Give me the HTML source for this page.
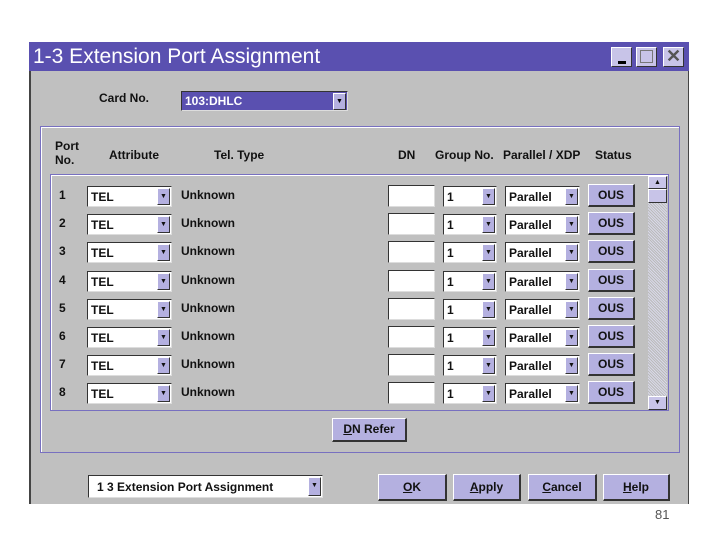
<!DOCTYPE html>
<html><head><meta charset="utf-8"><style>
*{box-sizing:border-box;margin:0;padding:0}
body{width:720px;height:540px;background:#fff;position:relative;overflow:hidden;font-family:"Liberation Sans",Arial,sans-serif;font-weight:bold;font-size:12px;color:#111}
.a{position:absolute}
#win{left:29px;top:42px;width:660px;height:462px;background:#c0c0c0;border-left:2px solid #444;border-top:1px solid #444;border-right:1px solid #444}
#title{left:29px;top:42px;width:660px;height:29px;background:#5a50b0;color:#fff;font-size:21px;font-weight:normal;padding:1px 0 0 4px;line-height:27px}
.tb{top:47px;width:21px;height:20px;background:#c8c4e8;border:1px solid #fff;border-right-color:#333;border-bottom-color:#333}
.grp{border:1px solid #7870c0;box-shadow:inset 1px 1px 0 #fff}
.cb{height:21px;background:#fff;border:1px solid #333;border-right-color:#ddd;border-bottom-color:#ddd;font-size:12px;padding:3px 0 0 3px}
.ar{position:absolute;right:1px;top:1px;width:13px;height:17px;background:#b4b0e0;border:1px solid #fff;border-right-color:#333;border-bottom-color:#333;font-size:7px;text-align:center;line-height:15px}
.btn{height:27px;background:#b4b0e0;border:1px solid #fff;border-right:2px solid #333;border-bottom:2px solid #333;text-align:center;line-height:24px;font-size:12px}
.ous{width:47px;height:23px;line-height:20px;font-size:12px}
.lb{font-size:12px}
.dn{width:47px;height:22px;background:#fff;border:1px solid #333;border-right-color:#ddd;border-bottom-color:#ddd}
u{text-decoration:underline}
</style></head><body>
<div id="win" class="a"></div>
<div id="title" class="a">1-3 Extension Port Assignment</div>
<div class="a tb" style="left:611px"><div class="a" style="left:6px;top:13px;width:8px;height:3px;background:#000"></div></div>
<div class="a tb" style="left:636px"><div class="a" style="left:3px;top:2px;width:13px;height:13px;border:1px solid #777"></div></div>
<div class="a tb" style="left:663px;font-size:18px;line-height:17px;text-align:center;color:#555;font-weight:bold">✕</div>

<div class="a lb" style="left:99px;top:91px;font-weight:bold">Card No.</div>
<div class="a cb" style="left:181px;top:91px;width:167px;height:20px;background:#5a50b0;color:#fff;padding:2px 0 0 3px">103:DHLC<div class="ar" style="color:#000">▼</div></div>

<div class="a grp" style="left:40px;top:126px;width:640px;height:327px"></div>
<div class="a" style="left:55px;top:139px;line-height:14px">Port<br>No.</div>
<div class="a" style="left:109px;top:148px">Attribute</div>
<div class="a" style="left:214px;top:148px">Tel. Type</div>
<div class="a" style="left:398px;top:148px">DN</div>
<div class="a" style="left:435px;top:148px">Group No.</div>
<div class="a" style="left:503px;top:148px">Parallel / XDP</div>
<div class="a" style="left:595px;top:148px">Status</div>

<div class="a grp" style="left:50px;top:174px;width:619px;height:237px"></div>
<div class="a" style="left:648px;top:176px;width:19px;height:234px;background:repeating-linear-gradient(45deg,#d8d8e8 0 1px,#bbb 1px 2px)"></div>
<div class="a" style="left:648px;top:176px;width:19px;height:13px;background:#c8c4e8;border:1px solid #fff;border-right-color:#333;border-bottom-color:#333;font-size:7px;text-align:center;line-height:11px">▲</div>
<div class="a" style="left:648px;top:189px;width:19px;height:14px;background:#c8c4e8;border:1px solid #fff;border-right-color:#333;border-bottom-color:#333"></div>
<div class="a" style="left:648px;top:396px;width:19px;height:14px;background:#c8c4e8;border:1px solid #fff;border-right-color:#333;border-bottom-color:#333;font-size:7px;text-align:center;line-height:12px">▼</div>

<!-- rows -->
<div class="a" style="left:0;top:185px;width:720px;height:22px">
<div class="a" style="left:59px;top:3px">1</div><div class="a cb" style="left:87px;top:1px;width:85px">TEL<div class="ar">▼</div></div><div class="a" style="left:181px;top:3px">Unknown</div><div class="a dn" style="left:388px;top:0"></div><div class="a cb" style="left:443px;top:1px;width:54px">1<div class="ar">▼</div></div><div class="a cb" style="left:505px;top:1px;width:75px">Parallel<div class="ar">▼</div></div><div class="a btn ous" style="left:588px;top:-1px">OUS</div></div>
<div class="a" style="left:0;top:213px;width:720px;height:22px">
<div class="a" style="left:59px;top:3px">2</div><div class="a cb" style="left:87px;top:1px;width:85px">TEL<div class="ar">▼</div></div><div class="a" style="left:181px;top:3px">Unknown</div><div class="a dn" style="left:388px;top:0"></div><div class="a cb" style="left:443px;top:1px;width:54px">1<div class="ar">▼</div></div><div class="a cb" style="left:505px;top:1px;width:75px">Parallel<div class="ar">▼</div></div><div class="a btn ous" style="left:588px;top:-1px">OUS</div></div>
<div class="a" style="left:0;top:241px;width:720px;height:22px">
<div class="a" style="left:59px;top:3px">3</div><div class="a cb" style="left:87px;top:1px;width:85px">TEL<div class="ar">▼</div></div><div class="a" style="left:181px;top:3px">Unknown</div><div class="a dn" style="left:388px;top:0"></div><div class="a cb" style="left:443px;top:1px;width:54px">1<div class="ar">▼</div></div><div class="a cb" style="left:505px;top:1px;width:75px">Parallel<div class="ar">▼</div></div><div class="a btn ous" style="left:588px;top:-1px">OUS</div></div>
<div class="a" style="left:0;top:270px;width:720px;height:22px">
<div class="a" style="left:59px;top:3px">4</div><div class="a cb" style="left:87px;top:1px;width:85px">TEL<div class="ar">▼</div></div><div class="a" style="left:181px;top:3px">Unknown</div><div class="a dn" style="left:388px;top:0"></div><div class="a cb" style="left:443px;top:1px;width:54px">1<div class="ar">▼</div></div><div class="a cb" style="left:505px;top:1px;width:75px">Parallel<div class="ar">▼</div></div><div class="a btn ous" style="left:588px;top:-1px">OUS</div></div>
<div class="a" style="left:0;top:298px;width:720px;height:22px">
<div class="a" style="left:59px;top:3px">5</div><div class="a cb" style="left:87px;top:1px;width:85px">TEL<div class="ar">▼</div></div><div class="a" style="left:181px;top:3px">Unknown</div><div class="a dn" style="left:388px;top:0"></div><div class="a cb" style="left:443px;top:1px;width:54px">1<div class="ar">▼</div></div><div class="a cb" style="left:505px;top:1px;width:75px">Parallel<div class="ar">▼</div></div><div class="a btn ous" style="left:588px;top:-1px">OUS</div></div>
<div class="a" style="left:0;top:326px;width:720px;height:22px">
<div class="a" style="left:59px;top:3px">6</div><div class="a cb" style="left:87px;top:1px;width:85px">TEL<div class="ar">▼</div></div><div class="a" style="left:181px;top:3px">Unknown</div><div class="a dn" style="left:388px;top:0"></div><div class="a cb" style="left:443px;top:1px;width:54px">1<div class="ar">▼</div></div><div class="a cb" style="left:505px;top:1px;width:75px">Parallel<div class="ar">▼</div></div><div class="a btn ous" style="left:588px;top:-1px">OUS</div></div>
<div class="a" style="left:0;top:354px;width:720px;height:22px">
<div class="a" style="left:59px;top:3px">7</div><div class="a cb" style="left:87px;top:1px;width:85px">TEL<div class="ar">▼</div></div><div class="a" style="left:181px;top:3px">Unknown</div><div class="a dn" style="left:388px;top:0"></div><div class="a cb" style="left:443px;top:1px;width:54px">1<div class="ar">▼</div></div><div class="a cb" style="left:505px;top:1px;width:75px">Parallel<div class="ar">▼</div></div><div class="a btn ous" style="left:588px;top:-1px">OUS</div></div>
<div class="a" style="left:0;top:382px;width:720px;height:22px">
<div class="a" style="left:59px;top:3px">8</div><div class="a cb" style="left:87px;top:1px;width:85px">TEL<div class="ar">▼</div></div><div class="a" style="left:181px;top:3px">Unknown</div><div class="a dn" style="left:388px;top:0"></div><div class="a cb" style="left:443px;top:1px;width:54px">1<div class="ar">▼</div></div><div class="a cb" style="left:505px;top:1px;width:75px">Parallel<div class="ar">▼</div></div><div class="a btn ous" style="left:588px;top:-1px">OUS</div></div>

<div class="a btn" style="left:332px;top:418px;width:75px;height:24px;line-height:21px"><u>D</u>N Refer</div>

<div class="a cb" style="left:88px;top:475px;width:235px;height:23px;padding:4px 0 0 8px">1 3 Extension Port Assignment<div class="ar" style="height:19px">▼</div></div>
<div class="a btn" style="left:378px;top:474px;width:69px"><u>O</u>K</div>
<div class="a btn" style="left:453px;top:474px;width:68px"><u>A</u>pply</div>
<div class="a btn" style="left:528px;top:474px;width:69px"><u>C</u>ancel</div>
<div class="a btn" style="left:603px;top:474px;width:67px"><u>H</u>elp</div>

<div class="a" style="left:655px;top:507px;font-weight:normal;font-size:13px;color:#555">81</div>
</body></html>
